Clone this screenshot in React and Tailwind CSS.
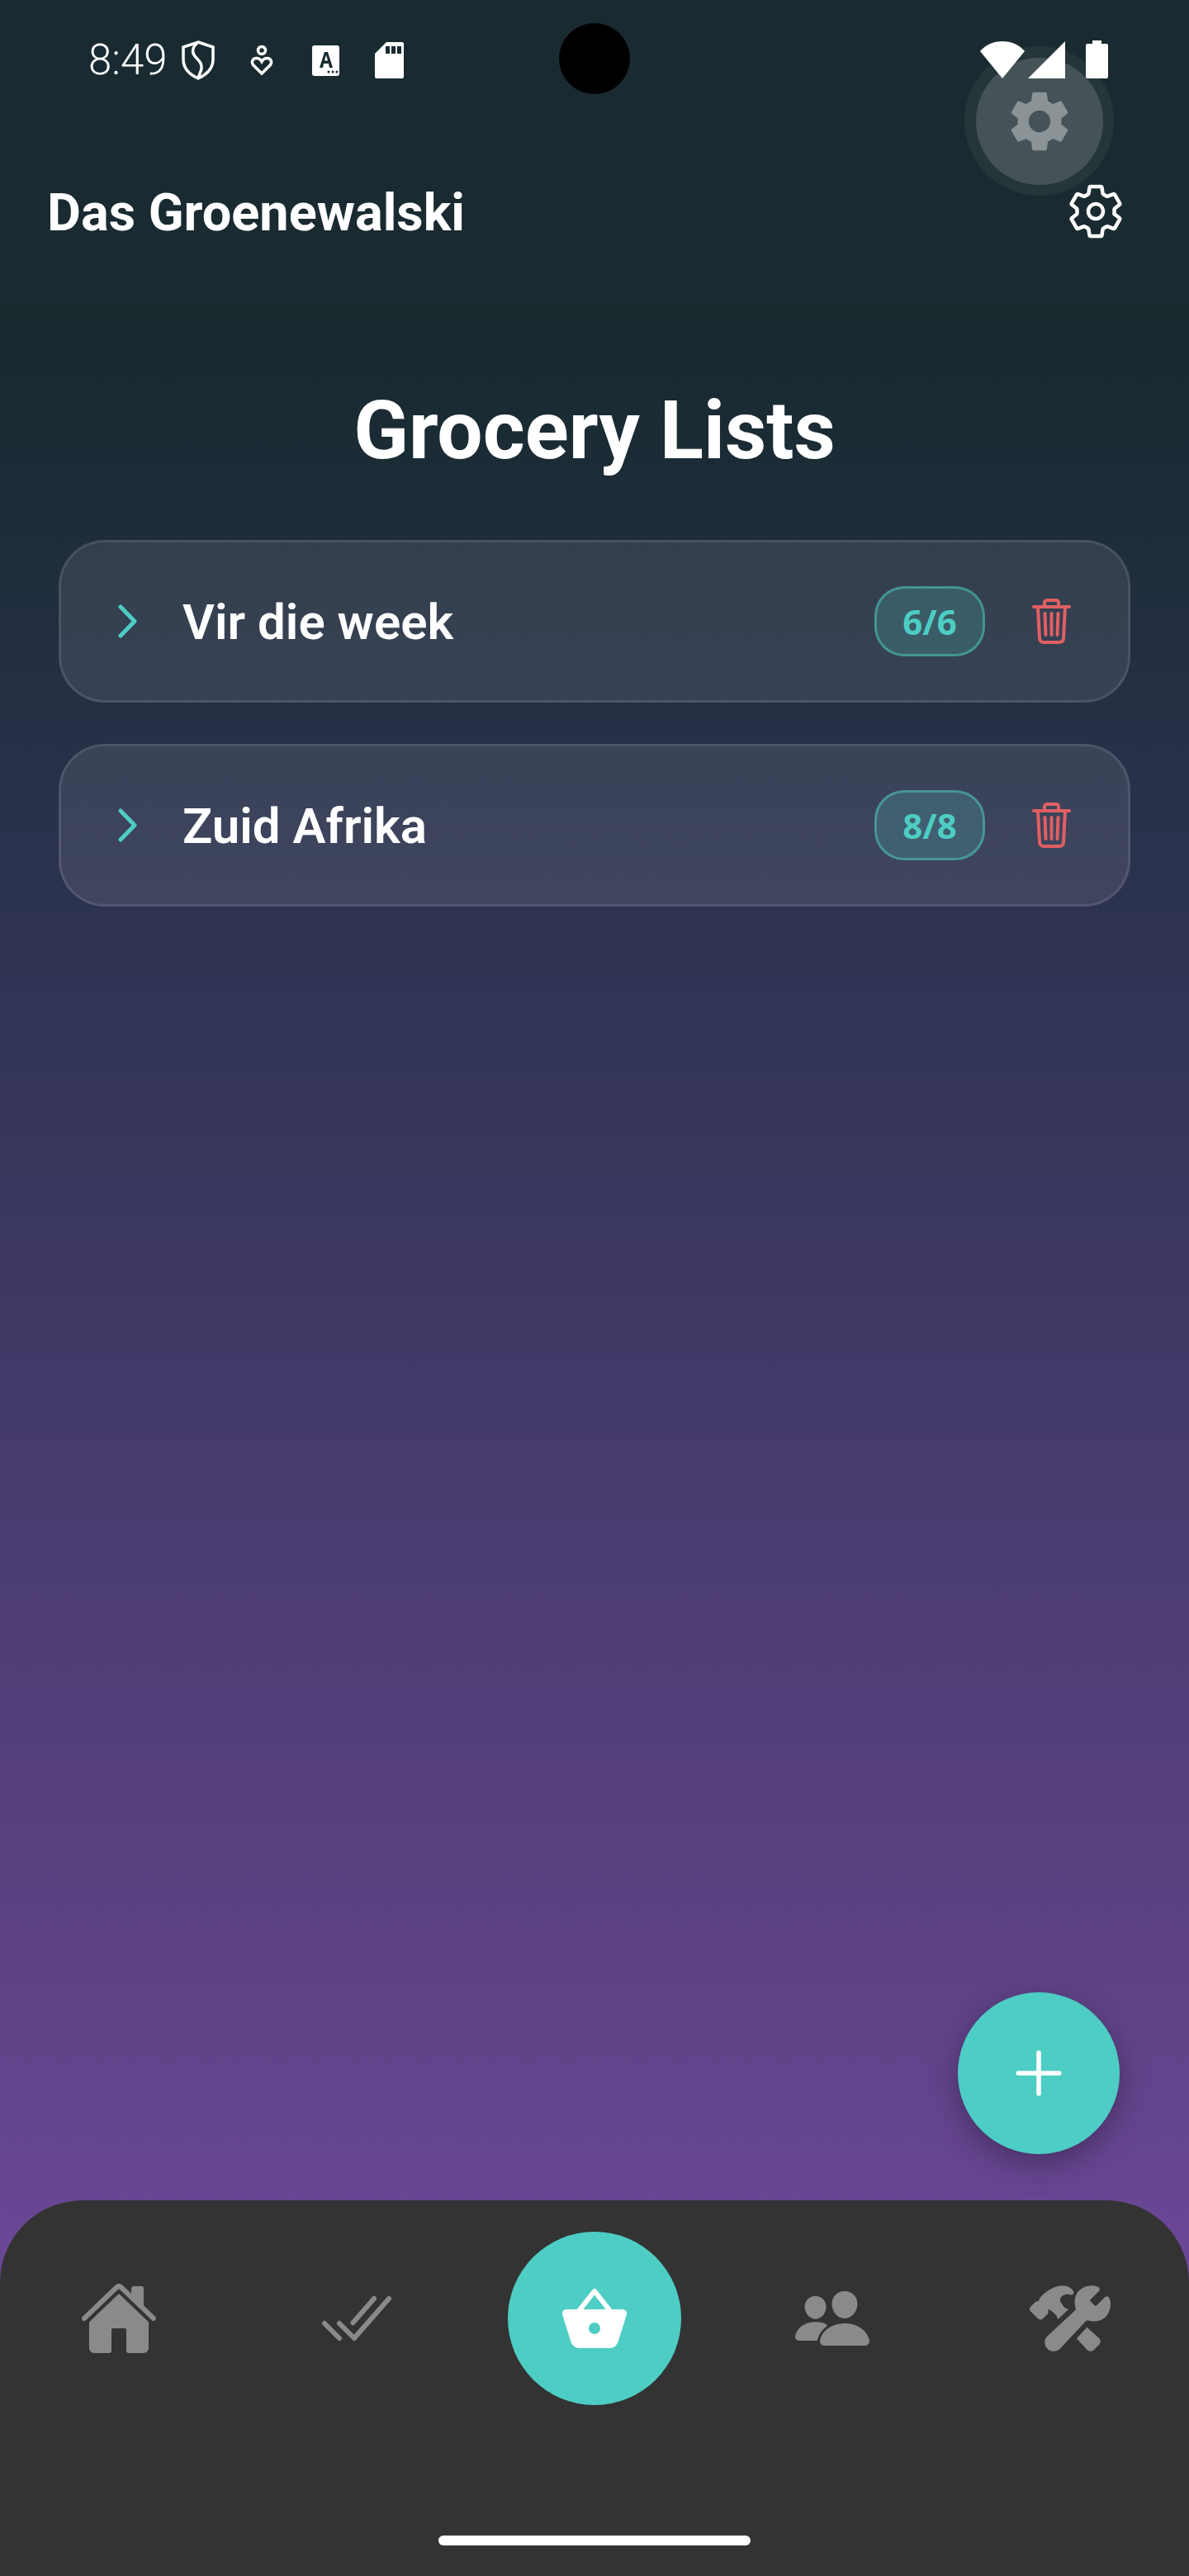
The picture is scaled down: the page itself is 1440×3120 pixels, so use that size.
import { IoHome, IoCheckmarkDoneOutline, IoPeople, IoConstruct, IoAddOutline, IoSettingsOutline } from 'react-icons/io5'
import { MdSettings } from 'react-icons/md'

const LISTS = [
  { name: 'Vir die week', count: '6/6' },
  { name: 'Zuid Afrika', count: '8/8' },
]

function TrashIcon() {
  return (
    <svg viewBox="0 0 47 55" className="w-[47px] h-[55px]" fill="none" stroke="#e05f63" strokeWidth="4" strokeLinecap="round" strokeLinejoin="round">
      <path d="M2 10h43" />
      <path d="M15 9V5a3 3 0 0 1 3-3h11a3 3 0 0 1 3 3v4" />
      <path d="M7 10l2 38a5 5 0 0 0 5 5h19a5 5 0 0 0 5-5l2-38" />
      <path d="M15.500 18l1 26M23.500 18v26M31.500 18l-1 26" />
    </svg>
  )
}

function Chevron() {
  return (
    <svg viewBox="0 0 23 41" className="w-[23px] h-[41px]" fill="none" stroke="#4ecdc4" strokeWidth="5" strokeLinecap="round" strokeLinejoin="round">
      <path d="M3 3l17 17.500L3 38" />
    </svg>
  )
}

function BasketIcon() {
  return (
    <svg viewBox="0 0 78 72" className="w-[78px] h-[72px]">
      <path d="M20 27L39 3l19 24" fill="none" stroke="#fff" strokeWidth="6" strokeLinejoin="round" />
      <path d="M5 25h68a5 5 0 0 1 5 6L68 63a11 11 0 0 1-10 9H20a11 11 0 0 1-10-9L0 31a5 5 0 0 1 5-6z" fill="#fff" />
      <circle cx="39" cy="48" r="7" fill="#4ecdc4" />
    </svg>
  )
}

function StatusLeft() {
  return (
    <div className="flex items-start">
      <span className="w-[113px] text-[51px] leading-[48px] font-light text-white font-['Roboto',sans-serif]">8:49</span>
      {/* shield */}
      <svg viewBox="0 0 40 48" className="w-[40px] h-[48px]" fill="none" stroke="#fff" strokeWidth="3.500">
        <path d="M20 2l18 6v15c0 10-7 18-18 23C9 41 2 33 2 23V8z" />
        <path d="M19 3c-6 5-7 11-3 16 4 5 9 8 8 15-.4 3-2 6-4 11" />
      </svg>
      {/* person heart */}
      <svg viewBox="0 0 28 37" className="ml-[43px] mt-[6px] w-[28px] h-[37px]" fill="none" stroke="#fff" strokeWidth="3.500">
        <circle cx="14" cy="6" r="4.500" />
        <path d="M14 34L3.500 23.500C1 20 3 15.500 7.500 15.500c3 0 5 1.500 6.500 4 1.500-2.500 3.500-4 6.500-4 4.500 0 6.500 4.500 4 8z" />
      </svg>
      {/* accessibility card */}
      <svg viewBox="0 0 33 37" className="ml-[47px] mt-[6px] w-[33px] h-[37px]">
        <rect width="33" height="37" rx="3" fill="#fff" />
        <path d="M9 27L15 8h4l6 19h-4l-1-5h-6l-1 5zM15 18.500h4l-2-7z" fill="#192b30" fillRule="evenodd" />
        <circle cx="20" cy="32" r="1.500" fill="#192b30" />
        <circle cx="25" cy="32" r="1.500" fill="#192b30" />
        <circle cx="30" cy="32" r="1.500" fill="#192b30" />
      </svg>
      {/* sd card */}
      <svg viewBox="0 0 35 44" className="ml-[43px] mt-[2px] w-[35px] h-[44px]">
        <path d="M14 0h19a2 2 0 0 1 2 2v40a2 2 0 0 1-2 2H2a2 2 0 0 1-2-2V14z" fill="#fff" />
        <path d="M13 5h5v9h-5zM20 5h5v9h-5zM27 5h5v9h-5z" fill="#192b30" />
      </svg>
    </div>
  )
}

function StatusRight() {
  return (
    <div className="flex items-start">
      <svg viewBox="0 0 54 45" className="mt-[1px] w-[54px] h-[45px]">
        <path d="M27 45L0 12C7 4 16 0 27 0s20 4 27 12z" fill="#fff" />
      </svg>
      <svg viewBox="0 0 45 45" className="ml-[4px] mt-[1px] w-[45px] h-[45px]">
        <path d="M45 0v45H0z" fill="#fff" />
      </svg>
      <svg viewBox="0 0 27 46" className="ml-[25px] w-[27px] h-[46px]">
        <path d="M8 0h11v4h6a2 2 0 0 1 2 2v38a2 2 0 0 1-2 2H2a2 2 0 0 1-2-2V6a2 2 0 0 1 2-2h6z" fill="#fff" />
      </svg>
    </div>
  )
}

function ListCard({ name, count }) {
  return (
    <div className="flex items-center h-[197px] pl-[69px] pr-[69px] rounded-[56px] border-[3px] border-white/10 bg-white/[0.09]">
      <Chevron />
      <span className="ml-[55px] pt-[3px] flex-1 text-[60px] leading-[70px] font-semibold text-white font-['Roboto',sans-serif]">{name}</span>
      <div className="flex items-center justify-center w-[134px] h-[85px] rounded-[36px] border-[3px] border-[#4ecdc4]/50 bg-[#4ecdc4]/20">
        <span className="text-[42px] leading-[48px] font-bold text-[#4ecdc4] font-['Noto_Sans',sans-serif]">{count}</span>
      </div>
      <div className="ml-[57px]">
        <TrashIcon />
      </div>
    </div>
  )
}

function NavItem({ children }) {
  return <div className="flex items-center justify-center h-[210px] text-[#8a8a8a]">{children}</div>
}

export default function App() {
  return (
    <div className="relative flex flex-col w-[1440px] h-[3120px] overflow-hidden font-['Roboto',sans-serif] bg-[linear-gradient(180deg,#16292d_0%,#16292d_11.800%,#2c3350_35%,#6a4694_87%)]">
      {/* top band: statusbar + header */}
      <div className="h-[369px] bg-[#192b30]">
        <div className="flex items-start justify-between h-[184px] pl-[107px] pr-[98px] pt-[49px]">
          <StatusLeft />
          <StatusRight />
        </div>
        <div className="flex items-center justify-between h-[144px] pl-[57px] pr-[77px]">
          <span className="pt-[3px] text-[63px] leading-[72px] font-bold text-white">Das Groenewalski</span>
          <IoSettingsOutline className="w-[72px] h-[72px] text-white" />
        </div>
      </div>

      {/* content */}
      <main className="flex-1 px-[71px] pt-[97px]">
        <h1 className="text-center text-[98px] leading-[112px] font-bold text-white">Grocery Lists</h1>
        <div className="mt-[76px] flex flex-col gap-[50px]">
          {LISTS.map(l => <ListCard key={l.name} name={l.name} count={l.count} />)}
        </div>
      </main>

      {/* bottom nav */}
      <nav className="flex flex-col items-center h-[455px] pt-[38px] rounded-t-[100px] bg-[#333333]">
        <div className="grid grid-cols-5 w-full">
          <NavItem><IoHome className="w-[96px] h-[96px]" /></NavItem>
          <NavItem><IoCheckmarkDoneOutline className="w-[96px] h-[96px]" /></NavItem>
          <div className="flex items-center justify-center">
            <div className="flex items-center justify-center w-[210px] h-[210px] rounded-full bg-[#4ecdc4]">
              <BasketIcon />
            </div>
          </div>
          <NavItem><IoPeople className="w-[96px] h-[96px]" /></NavItem>
          <NavItem><IoConstruct className="w-[98px] h-[98px]" /></NavItem>
        </div>
        <div className="mt-[158px] w-[378px] h-[12px] rounded-full bg-white" />
      </nav>

      {/* camera hole */}
      <div className="absolute left-[677px] top-[28px] w-[86px] h-[86px] rounded-full bg-black" />

      {/* ripple overlay */}
      <div className="absolute left-[1168px] top-[56px] flex items-center justify-center w-[181px] h-[181px] rounded-full bg-white/5">
        <div className="flex items-center justify-center w-[154px] h-[154px] rounded-full bg-white/15">
          <MdSettings className="w-[88px] h-[88px] text-[#8a9496]" />
        </div>
      </div>

      {/* fab */}
      <button type="button" className="absolute left-[1160px] top-[2413px] flex items-center justify-center w-[196px] h-[196px] rounded-full bg-[#4ecdc4] shadow-[0_12px_36px_rgba(0,0,0,0.3)]">
        <IoAddOutline className="w-[88px] h-[88px] text-white" />
      </button>
    </div>
  )
}
